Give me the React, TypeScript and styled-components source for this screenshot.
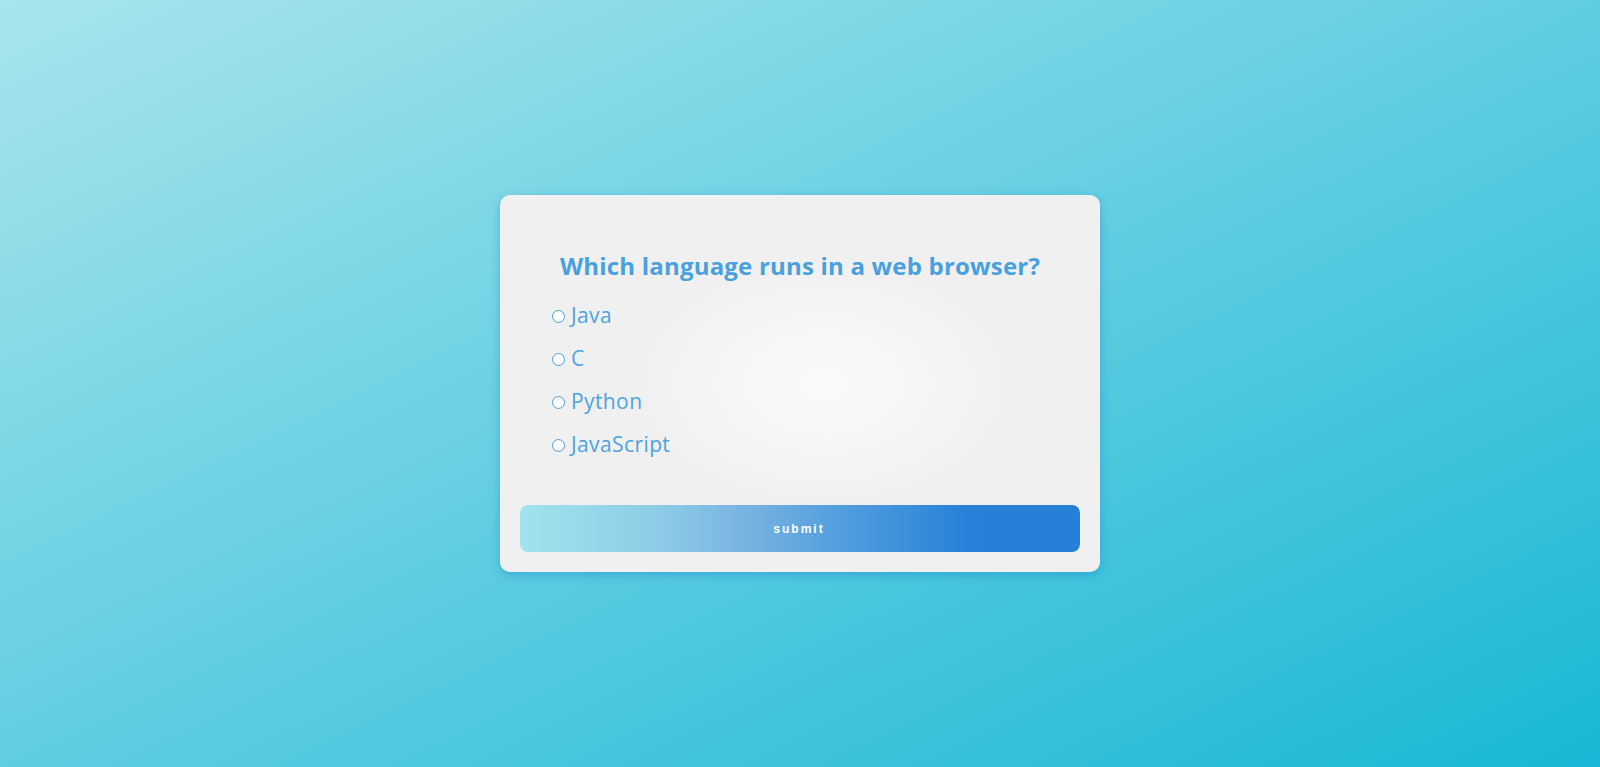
import React from "react";
import styled, { createGlobalStyle } from "styled-components";

const GlobalStyle = createGlobalStyle`
  * { box-sizing: border-box; }
  html, body { margin: 0; padding: 0; height: 100%; }
  body {
    font-family: "Open Sans", "Noto Sans", sans-serif;
    background: linear-gradient(to bottom right, #a8e4ec 0%, #18b7d5 100%);
    min-height: 767px;
  }
  #root { min-height: 767px; }
`;

const Page = styled.main`
  min-height: 767px;
  display: flex;
  align-items: center;
  justify-content: center;
`;

const Card = styled.form`
  width: 600px;
  height: 377px;
  padding: 55px 20px 20px;
  border-radius: 10px;
  background: radial-gradient(ellipse 185px 120px at 54% 50%, #f9f9f9 0%, #f7f7f7 40%, #f0f0f0 100%);
  box-shadow: 0 3px 10px rgba(30, 130, 210, 0.45);
  display: flex;
  flex-direction: column;
`;

const Question = styled.h2`
  margin: 0;
  font-family: "Open Sans", "Noto Sans", sans-serif;
  font-size: 24px;
  line-height: 32px;
  font-weight: 700;
  letter-spacing: 0.2px;
  color: #4aa0df;
  text-align: center;
`;

const Options = styled.div`
  margin-top: 21px;
  padding-left: 32px;
  display: flex;
  flex-direction: column;
  gap: 19px;
`;

const Option = styled.label`
  display: flex;
  align-items: center;
  font-family: "Open Sans", "Noto Sans", sans-serif;
  font-size: 21px;
  line-height: 24px;
  letter-spacing: 0.4px;
  color: #4ea3e0;
  cursor: pointer;
`;

const Radio = styled.input.attrs({ type: "radio" })`
  appearance: none;
  margin: 3px 6px 0 0;
  width: 13px;
  height: 13px;
  border-radius: 50%;
  border: 1px solid #4a9fdf;
  background: #ffffff;
  flex: none;
`;

const Submit = styled.button`
  margin-top: auto;
  height: 47px;
  width: 100%;
  border: none;
  border-radius: 8px;
  background: linear-gradient(90deg, #a2e3ee 0%, #8ecbe6 25%, #7db7e2 38%, #56a1de 55%, #2881d8 80%, #2580d8 100%);
  color: #ffffff;
  font-family: "Liberation Sans", Arial, sans-serif;
  font-size: 12px;
  font-weight: 700;
  letter-spacing: 2px;
  padding-left: 4px;
  cursor: pointer;
`;

const choices = ["Java", "C", "Python", "JavaScript"];

export default function App() {
  return (
    <>
      <GlobalStyle />
      <Page>
        <Card onSubmit={(e) => e.preventDefault()}>
          <Question>Which language runs in a web browser?</Question>
          <Options>
            {choices.map((c) => (
              <Option key={c}>
                <Radio name="answer" value={c} />
                {c}
              </Option>
            ))}
          </Options>
          <Submit type="submit">submit</Submit>
        </Card>
      </Page>
    </>
  );
}
